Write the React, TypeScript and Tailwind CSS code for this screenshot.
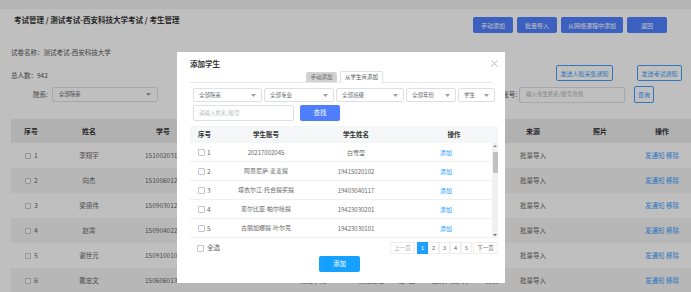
import React from "react"

const pageRows = [
  { no: 1, name: "李翔宇", id: "1510020312", college: "", major: "", exam: "" },
  { no: 2, name: "向杰", id: "1510060123", college: "", major: "", exam: "" },
  { no: 3, name: "梁德伟", id: "1509030124", college: "", major: "", exam: "" },
  { no: 4, name: "赵霄", id: "1509040225", college: "", major: "", exam: "" },
  { no: 5, name: "谢世元", id: "1509100102", college: "", major: "", exam: "" },
  { no: 6, name: "戴忠文", id: "1506060131", college: "测绘学院", major: "测绘工程2015级1班", exam: "西安科技大学2015测试" },
]

const modalRows = [
  { no: 1, account: "20217002045", name: "白雪莹" },
  { no: 2, account: "阿曼尼萨·麦麦提", name: "19415020102" },
  { no: 3, account: "塔衣尔江·托合提买提", name: "19403040117" },
  { no: 4, account: "索尔比亚·帕尔哈提", name: "19423030201" },
  { no: 5, account: "古丽加娜提·叶尔克", name: "19423030101" },
]

const Caret = () => (
  <svg width="5" height="3" viewBox="0 0 5 3">
    <path d="M0 0h5L2.5 3z" fill="#a0a0a0" />
  </svg>
)

const Check = ({ size = "h-[6px] w-[6px]" }: { size?: string }) => (
  <span className={`inline-block shrink-0 rounded-[1px] border border-[#c0c4cc] bg-white ${size}`} />
)

const Select = ({ label, width }: { label: string; width: string }) => (
  <div
    className={`flex h-[14px] items-center justify-between rounded-[2px] border border-[#dcdfe6] bg-white px-[5px] text-[5.5px] text-[#606266] ${width}`}
  >
    <span>{label}</span>
    <Caret />
  </div>
)

// narrow latin middle dot instead of the wide CJK one
const Name = ({ text }: { text: string }) => {
  const parts = text.split("·")
  return (
    <>
      {parts.map((p, i) => (
        <React.Fragment key={i}>
          {i > 0 && <span className="font-['Liberation_Sans',sans-serif]">·</span>}
          {p}
        </React.Fragment>
      ))}
    </>
  )
}

export default function App() {
  return (
    <div className="relative h-[292px] w-[691px] overflow-hidden bg-white font-['Noto_Sans_CJK_SC','Noto_Sans',sans-serif] text-[#333]">
      {/* page */}
      <div className="h-[9px] bg-[#f0f0f0]" />
      <div className="flex items-start justify-between pl-[14px] pr-[24px]">
        <div className="pt-[6px] text-[7.5px] font-bold leading-[10px] text-[#333]">
          考试管理 / 测试考试-西安科技大学考试 / 考生管理
        </div>
        <div className="flex gap-[4px] pt-[8px] text-[6px] text-white">
          <div className="flex h-[16px] w-[40px] items-center justify-center rounded-[2px] bg-[#5181ff]">手动添加</div>
          <div className="flex h-[16px] w-[40px] items-center justify-center rounded-[2px] bg-[#5181ff]">批量导入</div>
          <div className="flex h-[16px] w-[62px] items-center justify-center rounded-[2px] bg-[#5181ff]">从网络课程中添加</div>
          <div className="flex h-[16px] w-[40px] items-center justify-center rounded-[2px] bg-[#5181ff]">返回</div>
        </div>
      </div>
      <div className="mt-[14px] pl-[11px] text-[6.5px] leading-[10px] text-[#555]">试卷名称：测试考试-西安科技大学</div>
      <div className="mt-[8px] flex items-start justify-between pl-[11px] pr-[9px]">
        <div className="pt-[5px] text-[6.5px] leading-[10px] text-[#555]">总人数：942</div>
        <div className="flex gap-[24px] text-[6px] text-[#409eff]">
          <div className="flex h-[16px] w-[57px] items-center justify-center rounded-[2px] border border-[#409eff]">发送人脸采集通知</div>
          <div className="flex h-[16px] w-[45px] items-center justify-center rounded-[2px] border border-[#409eff]">发送考试通知</div>
        </div>
      </div>
      <div className="mt-[5px] flex h-[17px] items-center justify-between pl-[33px] pr-[37px]">
        <div className="flex items-center gap-[4px]">
          <span className="text-[6.5px] text-[#555]">院系:</span>
          <div className="flex h-[15px] w-[106px] items-center justify-between rounded-[2px] border border-[#dcdfe6] px-[6px] text-[5.5px] text-[#606266]">
            <span>全部院系</span>
            <Caret />
          </div>
        </div>
        <div className="flex items-center">
          <span className="text-[6.5px] text-[#555]">考生账号:</span>
          <div className="ml-[2px] flex h-[16px] w-[106px] items-center rounded-[2px] border border-[#dcdfe6] px-[6px] text-[5.5px] text-[#b0b0b0]">
            输入考生姓名/账号查找
          </div>
          <div className="ml-[9px] flex h-[17px] w-[20px] items-center justify-center rounded-[2px] border border-[#409eff] text-[6px] text-[#409eff]">
            查询
          </div>
        </div>
      </div>
      <div className="ml-[11px] mt-[16px]">
        <div className="grid h-[24px] grid-cols-[40px_76px_72px_84px_60px_87px_70px_66px_68px_56px] items-center bg-[#ededed] text-center text-[7px] font-bold text-[#333]">
          <span>序号</span>
          <span>姓名</span>
          <span>学号</span>
          <span />
          <span />
          <span />
          <span />
          <span>来源</span>
          <span>照片</span>
          <span>操作</span>
        </div>
        {pageRows.map((r, i) => (
          <div
            key={r.no}
            className={`grid h-[25px] grid-cols-[40px_76px_72px_84px_60px_87px_70px_66px_68px_56px] items-center text-center text-[6.5px] text-[#666] ${
              i % 2 === 1 ? "bg-[#f4f4f4]" : "bg-white"
            }`}
          >
            <span className="flex items-center gap-[3px] pl-[14px]">
              <Check size="h-[6px] w-[6px]" />
              <span className="text-[7px] leading-none">{r.no}</span>
            </span>
            <span>{r.name}</span>
            <span className="whitespace-nowrap">{r.id}</span>
            <span />
            <span>{r.college}</span>
            <span className="whitespace-nowrap">{r.major}</span>
            <span className="whitespace-nowrap">{r.exam}</span>
            <span>批量导入</span>
            <span />
            <span className="text-[#409eff]">发通知 移除</span>
          </div>
        ))}
      </div>

      {/* mask */}
      <div className="absolute inset-0 bg-black/25" />

      {/* dialog */}
      <div className="absolute left-[177px] top-[52px] flex h-[231px] w-[328px] flex-col bg-white">
        <div className="flex items-start justify-between pl-[13px] pr-[7px] pt-[7px]">
          <span className="text-[7.5px] font-bold leading-[10px] text-[#333]">添加学生</span>
          <svg width="7" height="7" viewBox="0 0 7 7" className="mt-[1px]">
            <path d="M0.5 0.5l6 6M6.5 0.5l-6 6" stroke="#b5b5b5" strokeWidth="0.9" />
          </svg>
        </div>
        <div className="mx-[13px] mt-[2px] flex h-[12px] items-end border-b border-[#e6e6e6] pl-[116px] text-[5.5px]">
          <div className="flex h-[10px] w-[31px] items-center justify-center rounded-t-[2px] bg-[#d2d2d2] text-[#666]">手动添加</div>
          <div className="-mb-px ml-[3px] flex h-[12px] w-[43px] items-center justify-center rounded-t-[2px] border border-b-0 border-[#e0e0e0] bg-white text-[#555]">
            从学生库添加
          </div>
        </div>
        <div className="mt-[5px] flex gap-[2px] pl-[16px]">
          <Select label="全部院系" width="w-[69px]" />
          <Select label="全部专业" width="w-[70px]" />
          <Select label="全部班级" width="w-[68px]" />
          <Select label="全部年份" width="w-[50px]" />
          <Select label="学生" width="w-[37px]" />
        </div>
        <div className="mt-[3px] flex gap-[6px] pl-[16px]">
          <div className="flex h-[16px] w-[101px] items-center rounded-[2px] border border-[#dcdfe6] px-[5px] text-[5.5px] text-[#b8b8b8]">
            请输入姓名/账号
          </div>
          <div className="flex h-[16px] w-[40px] items-center justify-center rounded-[2px] bg-[#4e7dfe] text-[6.5px] text-white">
            查找
          </div>
        </div>
        <div className="ml-[13px] mt-[5px] w-[308px]">
          <div className="grid h-[17px] grid-cols-[40px_72px_108px_88px] items-center bg-[#f5f6f7] text-[6.5px] font-semibold text-[#333]">
            <span className="pl-[8px]">序号</span>
            <span className="text-center">学生账号</span>
            <span className="text-center">学生姓名</span>
            <span className="text-center">操作</span>
          </div>
          <div className="flex">
            <div className="flex-1">
              {modalRows.map((r) => (
                <div
                  key={r.no}
                  className="grid h-[19px] grid-cols-[40px_72px_108px_72px] items-center border-b border-[#efefef] text-[6px] text-[#666]"
                >
                  <span className="flex items-center gap-[2px] pl-[8px]">
                    <Check size="h-[7px] w-[7px]" />
                    <span className="text-[6.5px] leading-none">{r.no}</span>
                  </span>
                  <span className="whitespace-nowrap text-center">
                    <Name text={r.account} />
                  </span>
                  <span className="whitespace-nowrap text-center">{r.name}</span>
                  <span className="text-center text-[#1e9fff]">添加</span>
                </div>
              ))}
            </div>
            <div className="flex w-[6px] flex-col items-center bg-[#f1f1f1]">
              <svg width="4" height="6" viewBox="0 0 4 6">
                <path d="M0 4h4L2 2z" fill="#888" />
              </svg>
              <div className="mt-[3px] h-[21px] w-[5px] bg-[#c1c1c1]" />
              <div className="flex-1" />
              <svg width="4" height="6" viewBox="0 0 4 6">
                <path d="M0 2h4L2 4z" fill="#666" />
              </svg>
            </div>
          </div>
        </div>
        <div className="mt-[4px] flex items-center justify-between pl-[20px] pr-[7px]">
          <div className="flex items-center gap-[3px] text-[6.5px] text-[#666]">
            <Check size="h-[7px] w-[7px]" />
            <span>全选</span>
          </div>
          <div className="flex h-[12px] text-[5.5px] text-[#666]">
            <div className="flex w-[25px] items-center justify-center border border-[#eee] text-[#aaa]">上一页</div>
            <div className="ml-[2px] flex w-[11px] items-center justify-center bg-[#1e9fff] text-white">1</div>
            <div className="flex w-[11px] items-center justify-center border border-[#eee]">2</div>
            <div className="flex w-[11px] items-center justify-center border border-[#eee]">3</div>
            <div className="flex w-[11px] items-center justify-center border border-[#eee]">4</div>
            <div className="flex w-[11px] items-center justify-center border border-[#eee]">5</div>
            <div className="ml-[1px] flex w-[25px] items-center justify-center border border-[#eee]">下一页</div>
          </div>
        </div>
        <div className="mt-[2px] flex justify-center pr-[3px]">
          <div className="flex h-[16px] w-[41px] items-center justify-center rounded-[2px] bg-[#16a0ff] text-[6.5px] text-white">
            添加
          </div>
        </div>
      </div>
    </div>
  )
}
